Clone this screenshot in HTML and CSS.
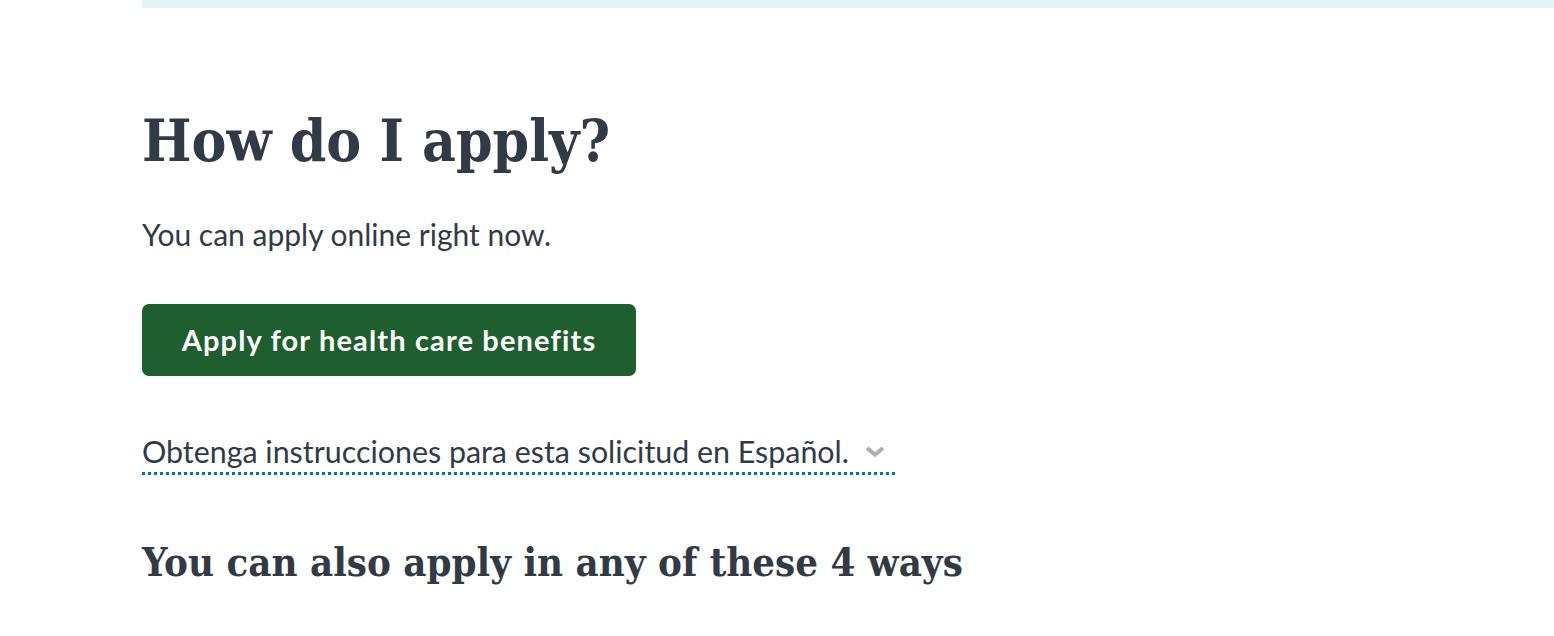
FILE: index.html
```html
<!DOCTYPE html>
<html lang="en">
<head>
<meta charset="utf-8">
<title>How do I apply?</title>
<link rel="stylesheet" href="styles.css">
</head>
<body>
<div class="page">
  <div class="top-bar"></div>
  <main class="content">
    <h1 class="title">How do I apply?</h1>
    <p class="lead">You can apply online right now.</p>
    <a class="btn-apply" href="#">Apply for health care benefits</a>
    <div class="spanish">
      <button class="spanish-toggle" type="button">
        <span class="spanish-text">Obtenga instrucciones para esta solicitud en Español.</span>
        <svg class="chevron" width="20" height="11" viewBox="0 0 20 11" aria-hidden="true">
          <path d="M2 2 L10 8.6 L18 2" fill="none" stroke="#aeb0b5" stroke-width="4.2"/>
        </svg>
      </button>
    </div>
    <h2 class="subtitle">You can also apply in any of these 4 ways</h2>
  </main>
</div>
</body>
</html>
```
FILE: styles.css
```css
html, body {
  margin: 0;
  padding: 0;
  background: #ffffff;
}
body {
  font-family: "Lato", "Open Sans", sans-serif;
  color: #323a45;
}
.page {
  padding-left: 142px;
}
.top-bar {
  height: 8px;
  background: #e1f3f8;
}
.content {
  display: flex;
  flex-direction: column;
  align-items: flex-start;
}
.title {
  font-family: "DejaVu Serif", serif;
  font-stretch: condensed;
  font-weight: 700;
  font-size: 58.2px;
  line-height: 1.2;
  margin: 98px 0 0 0;
  color: #323a45;
}
.lead {
  font-size: 30px;
  line-height: 1.5;
  margin: 36px 0 0 0;
}
.btn-apply {
  margin-top: 47px;
  display: inline-flex;
  align-items: center;
  justify-content: center;
  width: 494px;
  height: 72px;
  box-sizing: border-box;
  background: #1f5e2f;
  color: #ffffff;
  border-radius: 7px;
  font-weight: 700;
  font-size: 29px;
  letter-spacing: 1.15px;
  text-decoration: none;
}
.spanish {
  margin-top: 57px;
}
.spanish-toggle {
  display: inline-flex;
  align-items: center;
  gap: 16px;
  padding: 0 10px 3px 0;
  background: none;
  border: none;
  border-bottom: 3px dotted #0071bc;
  font-family: inherit;
  font-size: 30.4px;
  color: #323a45;
  cursor: pointer;
}
.chevron {
  margin-top: 1px;
}
.subtitle {
  font-family: "DejaVu Serif", serif;
  font-stretch: condensed;
  font-weight: 700;
  font-size: 39.8px;
  line-height: 1.3;
  margin: 62px 0 0 0;
  color: #323a45;
}
```
